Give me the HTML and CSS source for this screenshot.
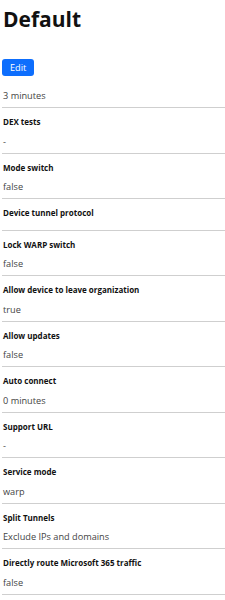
FILE: index.html
```html
<!DOCTYPE html>
<html lang="en">
<head>
    <meta charset="UTF-8">
    <meta name="viewport" content="width=device-width, initial-scale=1.0">
    <title>Default</title>
    <link rel="stylesheet" href="styles.css">
</head>
<body>
    <div class="page">
        <h1 class="title">Default</h1>
        <button class="edit-btn">Edit</button>
        <div class="summary">3 minutes</div>

        <div class="field">
            <div class="label">DEX tests</div>
            <div class="value">-</div>
        </div>
        <div class="field">
            <div class="label">Mode switch</div>
            <div class="value">false</div>
        </div>
        <div class="field">
            <div class="label">Device tunnel protocol</div>
            <div class="value"></div>
        </div>
        <div class="field">
            <div class="label">Lock WARP switch</div>
            <div class="value">false</div>
        </div>
        <div class="field">
            <div class="label">Allow device to leave organization</div>
            <div class="value">true</div>
        </div>
        <div class="field">
            <div class="label">Allow updates</div>
            <div class="value">false</div>
        </div>
        <div class="field">
            <div class="label">Auto connect</div>
            <div class="value">0 minutes</div>
        </div>
        <div class="field">
            <div class="label">Support URL</div>
            <div class="value">-</div>
        </div>
        <div class="field">
            <div class="label">Service mode</div>
            <div class="value">warp</div>
        </div>
        <div class="field">
            <div class="label">Split Tunnels</div>
            <div class="value">Exclude IPs and domains</div>
        </div>
        <div class="field">
            <div class="label">Directly route Microsoft 365 traffic</div>
            <div class="value">false</div>
        </div>
    </div>
</body>
</html>
```
FILE: styles.css
```css
html, body {
    margin: 0;
    padding: 0;
    background: #fff;
    font-family: "Open Sans", "Noto Sans", sans-serif;
    color: #111;
}
.page {
    padding: 0 0 0 2px;
}
.title {
    margin: 0;
    padding: 5px 0 0 1px;
    font-size: 21px;
    font-weight: 700;
    line-height: 28px;
}
.edit-btn {
    display: block;
    margin: 25.5px 0 0 0;
    padding: 0 8px;
    height: 17px;
    border: none;
    border-radius: 3px;
    background: #0d6efd;
    color: #fff;
    font-family: inherit;
    font-size: 9.2px;
    line-height: 17px;
}
.summary {
    padding: 13.5px 0 4px 1px;
    font-size: 9.2px;
    line-height: 14px;
    color: #444;
    border-bottom: 1px solid #cfcfcf;
}
.field {
    padding: 8px 0 4px 1px;
    border-bottom: 1px solid #cfcfcf;
}
.label {
    font-size: 8px;
    font-weight: 700;
    line-height: 11px;
    color: #111;
}
.value {
    margin-top: 7.5px;
    font-size: 9.2px;
    line-height: 14px;
    color: #444;
}
```
